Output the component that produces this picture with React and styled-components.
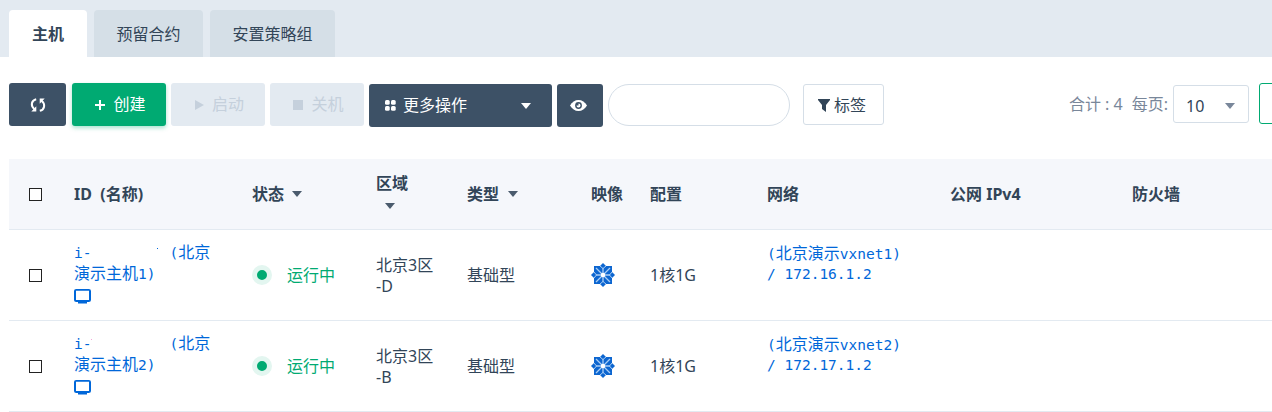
import React from "react";
import styled, { createGlobalStyle } from "styled-components";

const Global = createGlobalStyle`
  * { box-sizing: border-box; }
  html { overflow: hidden; }
  body {
    margin: 0;
    width: 1272px;
    height: 412px;
    overflow: hidden;
    background: #fff;
    color: #324558;
    font: 16px/21px "Noto Sans", "Noto Sans CJK SC", sans-serif;
  }
`;

const Page = styled.div`
  height: 412px;
  overflow: hidden;
`;

const TabBar = styled.nav`
  height: 57px;
  padding: 10px 0 0 9px;
  display: flex;
  gap: 7px;
  background: #e3eaf1;
`;

const Tab = styled.div`
  width: ${(p) => p.$w}px;
  height: 47px;
  padding-top: 2px;
  display: flex;
  align-items: center;
  justify-content: center;
  border-radius: 4px 4px 0 0;
  background: ${(p) => (p.$active ? "#fff" : "#d5dfe7")};
  font-weight: ${(p) => (p.$active ? 700 : 400)};
`;

const Toolbar = styled.div`
  display: flex;
  align-items: flex-start;
  height: 102px;
  padding: 26px 0 0 9px;
`;

const Button = styled.button`
  flex: none;
  display: flex;
  align-items: center;
  justify-content: ${(p) => p.$justify || "center"};
  width: ${(p) => p.$w}px;
  height: ${(p) => p.$h || 43}px;
  margin: ${(p) => p.$top || 0}px ${(p) => p.$right || 5}px 0 0;
  padding: ${(p) => p.$pad || "0"};
  border: ${(p) => (p.$border ? `1px solid ${p.$border}` : "0")};
  border-radius: 3px;
  background: ${(p) => p.$bg};
  color: ${(p) => p.$fg || "#fff"};
  font: inherit;
  box-shadow: ${(p) => (p.$raised ? "0 2px 4px rgba(0, 170, 114, 0.35)" : "none")};
  svg { flex: none; display: block; }
`;

const Label = styled.span`
  margin-left: ${(p) => p.$gap || 7}px;
  white-space: nowrap;
`;

const Push = styled.span`
  margin-left: auto;
`;

const Search = styled.input`
  flex: none;
  width: 182px;
  height: 42px;
  margin: 1px 13px 0 0;
  border: 1px solid #d5dee7;
  border-radius: 21px;
  outline: 0;
`;

const Summary = styled.div`
  display: flex;
  gap: 9px;
  margin: 11px 5px 0 auto;
  color: #79879a;
  white-space: nowrap;
`;

const Table = styled.div`
  margin-left: 9px;
`;

const Row = styled.div`
  display: grid;
  grid-template-columns: 65px 178px 124px 91px 124px 59px 117px 183px 182px 1fr;
  align-items: center;
  height: ${(p) => (p.$head ? 71 : 91)}px;
  border-bottom: 1px solid #e3eaf1;
  background: ${(p) => (p.$head ? "#f5f7fb" : "#fff")};
  font-weight: ${(p) => (p.$head ? 700 : 400)};
`;

const Cell = styled.div`
  display: flex;
  align-items: ${(p) => (p.$column ? "flex-start" : "center")};
  align-self: ${(p) => (p.$topAlign ? "start" : "center")};
  flex-direction: ${(p) => (p.$column ? "column" : "row")};
  padding: ${(p) => p.$pad || "0"};
  gap: ${(p) => p.$gap || 0}px;
  white-space: nowrap;
  color: ${(p) => p.$color || "inherit"};
`;

const SortBelow = styled.span`
  display: flex;
  padding: 9px 0 7px 9px;
`;

const ConsoleLink = styled.span`
  display: flex;
  padding-top: 5px;
`;

const Checkbox = styled.span`
  width: 13px;
  height: 13px;
  margin-left: 20px;
  border: 1px solid #222;
  background: #fff;
`;

const Line = styled.div`
  height: 21px;
  display: flex;
  align-items: baseline;
  white-space: pre;
`;

const Mono = styled.span`
  font-family: "DejaVu Sans Mono", monospace;
  font-size: 14.5px;
`;

const Gap = styled.span`
  align-self: flex-start;
  width: 78px;
  height: 7px;
  display: flex;
  align-items: flex-end;
  padding-left: ${(p) => p.$tick}px;
  &::before {
    content: "";
    width: 1px;
    height: 1px;
    background: ${(p) => p.$tint};
  }
`;

const StatusDot = styled.span`
  width: 20px;
  height: 20px;
  border-radius: 50%;
  border: 5px solid #e3f6f0;
  background: #00aa72;
`;

const Caret = ({ color = "#4a5b6d" }) => (
  <svg width="10" height="6" viewBox="0 0 10 6">
    <path d="M0 0h10L5 6z" fill={color} />
  </svg>
);

const RefreshIcon = () => (
  <svg width="16" height="14" viewBox="0 0 16 14" fill="none" stroke="#fff" strokeWidth="2">
    <path d="M6.200 1.200C1.400 2.200.2 7.800 4.400 11.200M9.800 12.800c4.800-1 6-6.600 1.800-10" />
    <path d="M6.300 8.300v5.200H1.300zM9.700 5.700V.5h5z" fill="#fff" stroke="none" />
  </svg>
);

const PlusIcon = () => (
  <svg width="10" height="10" viewBox="0 0 10 10">
    <path d="M4 0h2v4h4v2H6v4H4V6H0V4h4z" fill="#fff" />
  </svg>
);

const PlayIcon = () => (
  <svg width="9" height="10" viewBox="0 0 9 10">
    <path d="M0 0l9 5-9 5z" fill="#c5d0dc" />
  </svg>
);

const StopIcon = () => (
  <svg width="10" height="10" viewBox="0 0 10 10">
    <path d="M0 0h10v10H0z" fill="#c5d0dc" />
  </svg>
);

const GridIcon = () => (
  <svg width="11" height="11" viewBox="0 0 11 11" fill="#fff">
    <rect width="4.700" height="4.700" rx="1.500" />
    <rect x="6" width="4.700" height="4.700" rx="1.500" />
    <rect y="6" width="4.700" height="4.700" rx="1.500" />
    <rect x="6" y="6" width="4.700" height="4.700" rx="1.500" />
  </svg>
);

const EyeIcon = () => (
  <svg width="17" height="11" viewBox="0 0 17 11">
    <path d="M0 5.500C2 2 5 0 8.500 0S15 2 17 5.500C15 9 12 11 8.500 11S2 9 0 5.500z" fill="#fff" />
    <circle cx="8.500" cy="5.500" r="3.400" fill="#3d5166" />
    <path d="M8.500 3.500a2 2 0 1 1-2 2h2z" fill="#fff" />
  </svg>
);

const FunnelIcon = () => (
  <svg width="12" height="13" viewBox="0 0 12 13">
    <path d="M0 0h12v1L8 6v7l-4-3V6L0 1z" fill="#324558" />
  </svg>
);

const MonitorIcon = () => (
  <svg width="17" height="15" viewBox="0 0 17 15">
    <path
      d="M2.200 0h12.600Q17 0 17 2v9q0 2-2.200 2H13v1.500H4V13H2.200Q0 13 0 11V2Q0 0 2.200 0zM2 1.800V11h13V1.800z"
      fill="#0067d9"
      fillRule="evenodd"
    />
  </svg>
);

const ImageIcon = () => (
  <svg width="24" height="24" viewBox="-12 -12 24 24">
    <path d="M-9-9H9V9H-9z" fill="#0d66d0" />
    <path d="M-12 0L0-12 12 0 0 12z" fill="#0d66d0" />
    <g stroke="#a9cdf5" strokeWidth="1.300">
      <path d="M0-7V7M-7 0H7M-7-7L7 7M7-7L-7 7" />
      <path d="M-3-9L0-6.500 3-9M-3 9L0 6.500 3 9M-9-3L-6.500 0-9 3M9-3L6.500 0 9 3" fill="none" strokeWidth="1" />
    </g>
    <circle r="2.200" fill="#fff" />
  </svg>
);

const hosts = [
  { n: 1, zone: "D", ip: "172.16.1.2", tick: 66, tint: "#0067d9" },
  { n: 2, zone: "B", ip: "172.17.1.2", tick: 0, tint: "#f3a8d8" },
];

export default function App() {
  return (
    <Page>
      <Global />
      <TabBar>
        <Tab $w={78} $active>主机</Tab>
        <Tab $w={109}>预留合约</Tab>
        <Tab $w={125}>安置策略组</Tab>
      </TabBar>
      <Toolbar>
        <Button $w={57} $right={6} $bg="#3d5166"><RefreshIcon /></Button>
        <Button $w={94} $pad="0 0 0 3px" $bg="#00aa72" $raised><PlusIcon /><Label $gap={8}>创建</Label></Button>
        <Button $w={94} $pad="0 0 0 3px" $bg="#e3eaf1" $fg="#c5d0dc"><PlayIcon /><Label $gap={8}>启动</Label></Button>
        <Button $w={94} $pad="0 0 0 3px" $bg="#e3eaf1" $fg="#c5d0dc"><StopIcon /><Label $gap={8}>关机</Label></Button>
        <Button $w={183} $top={1} $bg="#3d5166" $justify="flex-start" $pad="0 21px 0 16px">
          <GridIcon /><Label>更多操作</Label><Push><Caret color="#fff" /></Push>
        </Button>
        <Button $w={46} $top={1} $pad="0 4px 0 0" $bg="#3d5166"><EyeIcon /></Button>
        <Search />
        <Button $w={81} $h={41} $top={1} $bg="#fff" $fg="#324558" $border="#d5dee7" $pad="1px 3px 0 0">
          <FunnelIcon /><Label $gap={4}>标签</Label>
        </Button>
        <Summary><span>合计 : 4</span><span>每页:</span></Summary>
        <Button $w={76} $h={38} $top={2} $right={10} $bg="#fff" $fg="#324558" $border="#d5dee7" $justify="flex-start" $pad="4px 13px 0 12px">
          10<Push><Caret color="#79879a" /></Push>
        </Button>
        <Button $w={60} $h={41} $right={-47} $bg="#fff" $border="#00aa72" />
      </Toolbar>
      <Table>
        <Row $head>
          <Cell><Checkbox /></Cell>
          <Cell>ID&nbsp; (名称)</Cell>
          <Cell $gap={8}>状态<Caret /></Cell>
          <Cell $column><span>区域</span><SortBelow><Caret /></SortBelow></Cell>
          <Cell $gap={9}>类型<Caret /></Cell>
          <Cell>映像</Cell>
          <Cell>配置</Cell>
          <Cell>网络</Cell>
          <Cell>公网 IPv4</Cell>
          <Cell>防火墙</Cell>
        </Row>
        {hosts.map((h) => (
          <Row key={h.n}>
            <Cell><Checkbox /></Cell>
            <Cell $topAlign $column $pad="12px 0 0" $color="#0067d9">
              <Line><Mono>i-</Mono><Gap $tick={h.tick} $tint={h.tint} /><Mono>(</Mono>北京</Line>
              <Line>演示主机<Mono>{h.n})</Mono></Line>
              <ConsoleLink><MonitorIcon /></ConsoleLink>
            </Cell>
            <Cell $gap={15} $color="#00aa72"><StatusDot />运行中</Cell>
            <Cell $column $pad="1px 0 0"><Line>北京3区</Line><Line>-{h.zone}</Line></Cell>
            <Cell $pad="1px 0 0">基础型</Cell>
            <Cell><ImageIcon /></Cell>
            <Cell $pad="1px 0 0">1核1G</Cell>
            <Cell $topAlign $column $pad="13px 0 0" $color="#0067d9">
              <Line><Mono>(</Mono>北京演示<Mono>vxnet{h.n})</Mono></Line>
              <Line><Mono>/ {h.ip}</Mono></Line>
            </Cell>
          </Row>
        ))}
      </Table>
    </Page>
  );
}
